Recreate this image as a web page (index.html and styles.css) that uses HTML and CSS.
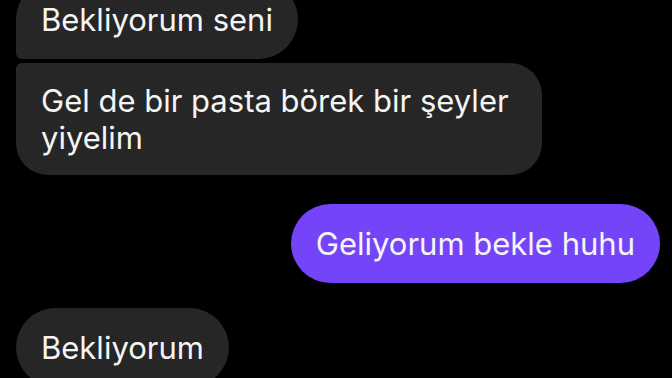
FILE: index.html
```html
<!DOCTYPE html>
<html>
<head>
    <title>Sohbet</title>
    <meta charset="utf-8">
    <meta name="viewport" content="width=device-width, initial-scale=1">
    <link rel="stylesheet" href="styles.css">
</head>
<body>
    <main class="thread">
        <div class="group them">
            <div class="bubble first">Bekliyorum seni</div>
            <div class="bubble last">Gel de bir pasta börek bir şeyler yiyelim</div>
        </div>
        <div class="group me">
            <div class="bubble">Geliyorum bekle huhu</div>
        </div>
        <div class="group them tail">
            <div class="bubble">Bekliyorum</div>
        </div>
    </main>
</body>
</html>
```
FILE: styles.css
```css
:root {
    --bg: #000;
    --them: #262626;
    --me: #7445f8;
    --text: #f5f5f5;
}

body {
    margin: 0;
    background-color: var(--bg);
    color: var(--text);
    font-family: Inter, "Noto Sans", sans-serif;
    overflow: hidden;
}
.thread {
    display: flex;
    flex-direction: column;
    gap: 29px;
    padding: 0 12px 0 16px;
    margin-top: -20px;
}
.group {
    display: flex;
    flex-direction: column;
    gap: 4px;
}
.group.them {
    align-items: flex-start;
}
.group.me {
    align-items: flex-end;
}
.group.tail {
    margin-top: -4px;
}
.bubble {
    font-size: 31px;
    line-height: 37px;
    padding: 21px 25px;
    border-radius: 40px;
    max-width: 476px;
}
.them .bubble {
    background-color: var(--them);
}
.me .bubble {
    background-color: var(--me);
}
.them .first {
    border-bottom-left-radius: 6px;
}
.them .last {
    padding: 19px 25px;
    border-radius: 32px;
    border-top-left-radius: 6px;
}
```
